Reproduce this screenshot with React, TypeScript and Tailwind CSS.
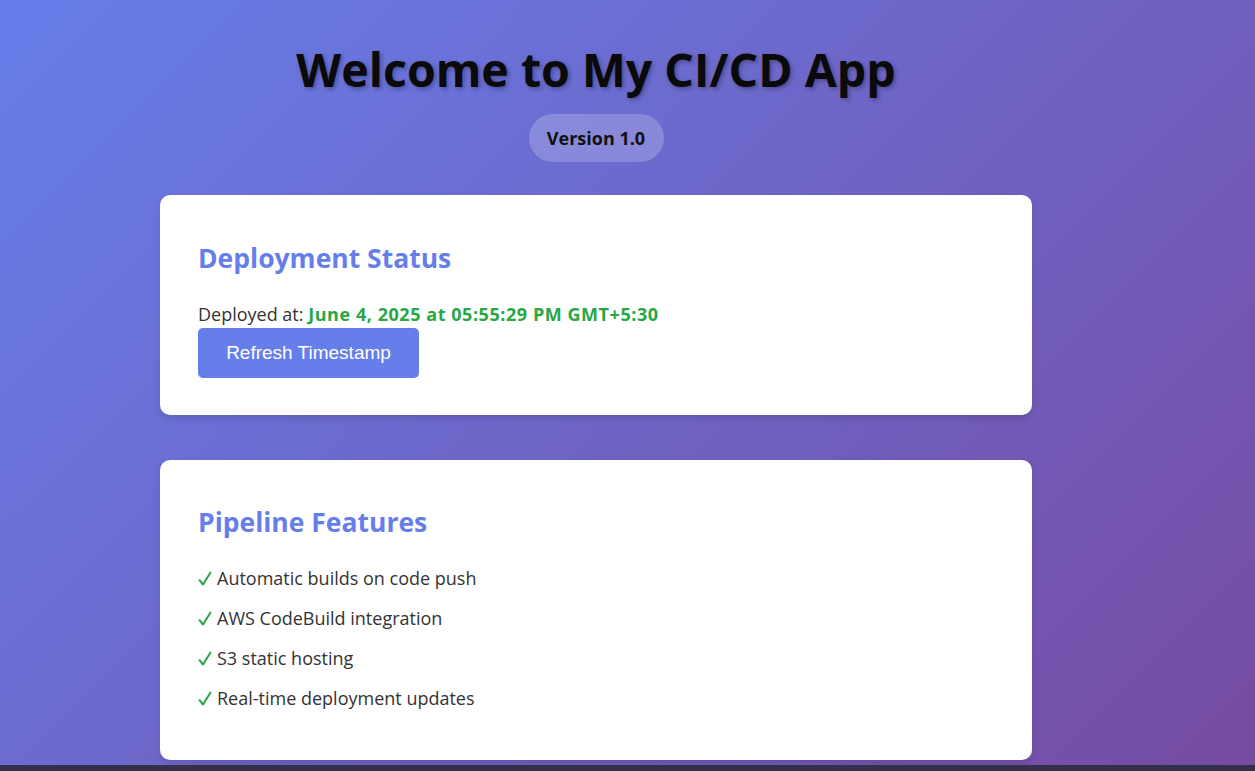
const FEATURES = [
  "Automatic builds on code push",
  "AWS CodeBuild integration",
  "S3 static hosting",
  "Real-time deployment updates",
];

function Check() {
  return (
    <svg width="14" height="16" viewBox="0 0 14 16" className="mr-[5px] inline-block align-[-2px]">
      <path d="M1.5 9.2 L5 13.5 L12.5 1.5" fill="none" stroke="#28a745" strokeWidth="2" strokeLinecap="round" strokeLinejoin="round" />
    </svg>
  );
}

export default function App() {
  return (
    <div className="flex h-[771px] flex-col overflow-hidden bg-[linear-gradient(135deg,#667eea_0%,#764ba2_100%)] font-['Open_Sans',sans-serif] text-[#333]">
      <div className="flex-1 overflow-hidden">
        <div className="ml-[160px] w-[872px]">
          {/* Header */}
          <header className="flex flex-col items-center pt-[39px]">
            <h1 className="text-[46.5px] leading-[60px] font-bold text-[#0a0a0a] [text-shadow:2px_2px_4px_rgba(0,0,0,0.3)]">
              Welcome to My CI/CD App
            </h1>
            <span className="mt-[15px] flex h-[48px] w-[135px] items-center justify-center rounded-full bg-white/20 text-[18px] font-bold text-[#111]">
              Version 1.0
            </span>
          </header>

          {/* Deployment status */}
          <section className="mt-[33px] rounded-[10px] bg-white px-[38px] pt-[45px] pb-[37px] shadow-[0_4px_6px_rgba(0,0,0,0.1)]">
            <h2 className="text-[26.5px] leading-[36px] font-bold text-[#667eea]">Deployment Status</h2>
            <p className="mt-[26px] text-[18px] leading-[24px]">
              Deployed at:{" "}
              <span className="font-bold tracking-[0.55px] text-[#28a745]">June 4, 2025 at 05:55:29 PM GMT+5:30</span>
            </p>
            <button className="mt-[2px] h-[50px] w-[221px] rounded-[5px] bg-[#667eea] font-['Liberation_Sans',sans-serif] text-[19px] text-white">
              Refresh Timestamp
            </button>
          </section>

          {/* Pipeline features */}
          <section className="mt-[45px] rounded-[10px] bg-white px-[38px] pt-[44px] pb-[42px] shadow-[0_4px_6px_rgba(0,0,0,0.1)]">
            <h2 className="text-[26.5px] leading-[36px] font-bold text-[#667eea]">Pipeline Features</h2>
            <ul className="mt-[18px]">
              {FEATURES.map((f) => (
                <li key={f} className="py-[8px] text-[18px] leading-[24px]">
                  <Check />
                  {f}
                </li>
              ))}
            </ul>
          </section>
        </div>
      </div>
      <div className="h-[6px] shrink-0 bg-[#33304a]" />
    </div>
  );
}
